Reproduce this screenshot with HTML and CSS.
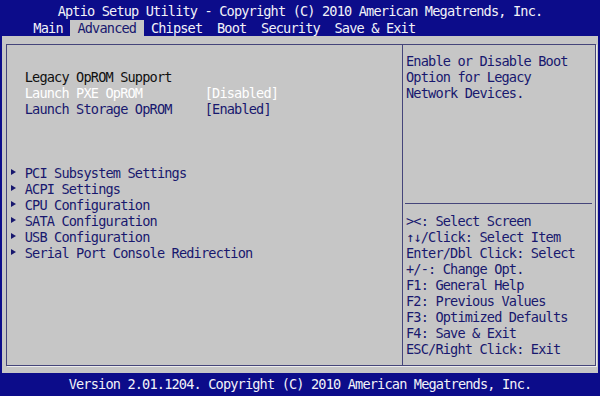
FILE: index.html
```html
<!DOCTYPE html>
<html lang="en">
<head>
    <meta charset="UTF-8">
    <meta name="viewport" content="width=device-width, initial-scale=1.0">
    <title>Aptio Setup Utility</title>
    <link rel="stylesheet" href="styles.css">
</head>
<body>
    <div class="header">
        <div class="title">Aptio Setup Utility - Copyright (C) 2010 American Megatrends, Inc.</div>
        <div class="tabs">
            <span class="tab">Main</span>
            <span class="tab active">Advanced</span>
            <span class="tab">Chipset</span>
            <span class="tab">Boot</span>
            <span class="tab">Security</span>
            <span class="tab">Save &amp; Exit</span>
        </div>
    </div>

    <div class="main">
        <div class="frame">
            <div class="left">
                <div class="row"></div>
                <div class="row item title-item">Legacy OpROM Support</div>
                <div class="row item selected"><span class="label">Launch PXE OpROM</span><span class="value">[Disabled]</span></div>
                <div class="row item"><span class="label">Launch Storage OpROM</span><span class="value">[Enabled]</span></div>
                <div class="row"></div>
                <div class="row"></div>
                <div class="row"></div>
                <div class="row sub"><span class="arrow"></span>PCI Subsystem Settings</div>
                <div class="row sub"><span class="arrow"></span>ACPI Settings</div>
                <div class="row sub"><span class="arrow"></span>CPU Configuration</div>
                <div class="row sub"><span class="arrow"></span>SATA Configuration</div>
                <div class="row sub"><span class="arrow"></span>USB Configuration</div>
                <div class="row sub"><span class="arrow"></span>Serial Port Console Redirection</div>
            </div>
            <div class="right">
                <div class="help">
                    <div class="row">Enable or Disable Boot</div>
                    <div class="row">Option for Legacy</div>
                    <div class="row">Network Devices.</div>
                </div>
                <div class="divider"></div>
                <div class="keys">
                    <div class="row">&gt;&lt;: Select Screen</div>
                    <div class="row">↑↓/Click: Select Item</div>
                    <div class="row">Enter/Dbl Click: Select</div>
                    <div class="row">+/-: Change Opt.</div>
                    <div class="row">F1: General Help</div>
                    <div class="row">F2: Previous Values</div>
                    <div class="row">F3: Optimized Defaults</div>
                    <div class="row">F4: Save &amp; Exit</div>
                    <div class="row">ESC/Right Click: Exit</div>
                </div>
            </div>
        </div>
    </div>

    <div class="footer">Version 2.01.1204. Copyright (C) 2010 American Megatrends, Inc.</div>
</body>
</html>
```

FILE: styles.css
```css
body {
    margin: 0;
    width: 600px;
    height: 396px;
    overflow: hidden;
    background-color: #0c0c8a;
    font-family: "DejaVu Sans Mono", "Liberation Mono", monospace;
    font-size: 13.6px;
    letter-spacing: -0.84px;
    color: #18186e;
}
.header {
    height: 36px;
    color: #f2f2f8;
}
.title {
    height: 20px;
    line-height: 22px;
    text-align: center;
    white-space: pre;
}
.tabs {
    display: flex;
    height: 16px;
    line-height: 17px;
    padding-left: 26px;
}
.tab {
    padding: 0 7.35px;
    white-space: pre;
}
.tab.active {
    background-color: #c6c6c6;
    color: #18186e;
}
.main {
    margin: 0 2px;
    height: 337px;
    box-sizing: border-box;
    padding: 8px 2px 7px 4px;
    background-color: #c6c6c6;
}
.frame {
    display: flex;
    height: 100%;
    box-sizing: border-box;
    border: 1px solid #45457a;
    box-shadow: 1px 1px 0 #ececec;
}
.row {
    height: 16px;
    line-height: 16px;
    white-space: pre;
}
.left {
    width: 395px;
    padding: 8px 0 0 3px;
    box-sizing: border-box;
}
.item {
    padding-left: 14.7px;
}
.title-item {
    color: #101010;
}
.selected {
    color: #ffffff;
}
.label {
    display: inline-block;
    width: 180px;
}
.sub {
    display: flex;
    align-items: center;
}
.arrow {
    width: 14.7px;
    height: 16px;
    position: relative;
    flex-shrink: 0;
}
.arrow::before {
    content: "";
    position: absolute;
    left: 1px;
    top: 4px;
    border-left: 5px solid #18186e;
    border-top: 3.5px solid transparent;
    border-bottom: 3.5px solid transparent;
}
.right {
    flex: 1;
    border-left: 1px solid #45457a;
    padding-top: 8px;
}
.help, .keys {
    padding-left: 3px;
}
.help {
    height: 144px;
}
.divider {
    height: 7px;
    margin: 0 3px 9px 2px;
    border-bottom: 1px solid #45457a;
    box-sizing: border-box;
}
.footer {
    height: 23px;
    line-height: 22px;
    text-align: center;
    color: #f2f2f8;
    white-space: pre;
}
```
